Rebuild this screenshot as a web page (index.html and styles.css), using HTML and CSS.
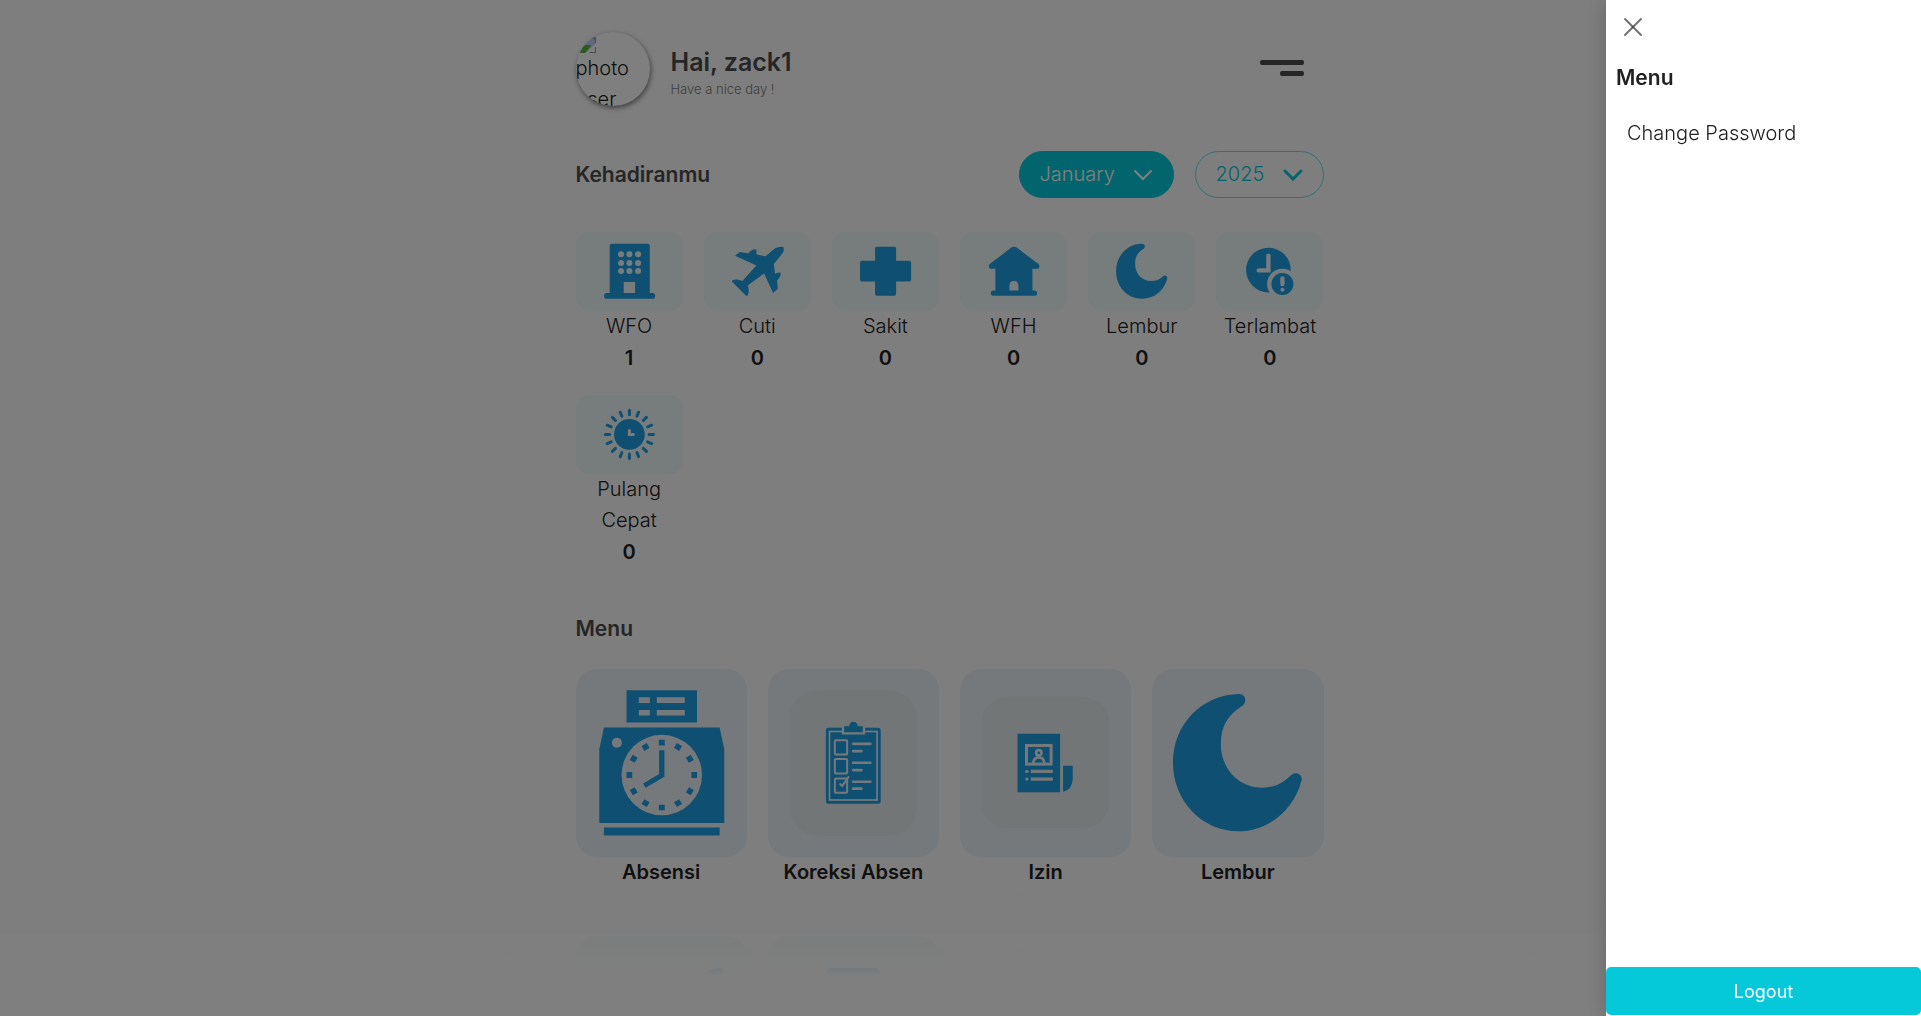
FILE: index.html
```html
<!DOCTYPE html>
<html lang="id">
<head>
<meta charset="utf-8">
<meta name="viewport" content="width=device-width, initial-scale=1">
<title>Kehadiran</title>
<link rel="stylesheet" href="styles.css">
</head>
<body>
<main class="page">
  <header class="profile">
    <div class="avatar" role="img" aria-label="photo user">
      <svg class="avatar-icon" viewBox="0 0 16 16" aria-hidden="true"><path fill="#c0d0f8" d="M0 0h13l2 3v4L7 15H0z"/><path fill="#5bb040" d="M0 15C2 9 6 6 11 9L5 16H0z"/><path fill="#fff" d="M6 16L16 6v4l-6 6z"/><path fill="#999" d="M11 0h5v6h-1V3L12 1zM15 10v5h-5l-1 1h7v-6z"/></svg>
      <span>photo</span><span>user</span>
    </div>
    <div class="greeting">
      <h1>Hai, zack1</h1>
      <p>Have a nice day !</p>
    </div>
    <button class="burger" type="button" aria-label="Buka menu"><span></span><span></span></button>
  </header>

  <section>
    <div class="section-head">
      <h2>Kehadiranmu</h2>
      <form class="filters">
        <div class="pill pill-month">
          <select aria-label="Bulan"><option>January</option></select>
          <svg viewBox="0 0 20 12" aria-hidden="true"><path d="M2 2l8 8 8-8"/></svg>
        </div>
        <div class="pill pill-year">
          <select aria-label="Tahun"><option>2025</option></select>
          <svg viewBox="0 0 20 12" aria-hidden="true"><path d="M2 2l8 8 8-8"/></svg>
        </div>
      </form>
    </div>
    <ul class="stats">
      <li>
        <svg class="tile" viewBox="45 37 321 237" aria-hidden="true"><path fill-rule="evenodd" d="M153 72H259Q266 72 266 79V220H274Q282 220 282 228.500Q282 237 274 237H137Q129 237 129 228.500Q129 220 137 220H146V79Q146 72 153 72zM188 187V220H222V187z"/><g class="hole"><circle cx="180" cy="104" r="9"/><circle cx="205" cy="104" r="9"/><circle cx="231" cy="104" r="9"/><circle cx="180" cy="130" r="9"/><circle cx="205" cy="130" r="9"/><circle cx="231" cy="130" r="9"/><circle cx="180" cy="154" r="9"/><circle cx="205" cy="154" r="9"/><circle cx="231" cy="154" r="9"/></g></svg>
        <span>WFO</span><strong>1</strong>
      </li>
      <li>
        <svg class="tile" viewBox="430 37 321 237" aria-hidden="true"><path d="M514 182Q530 176 545 184L587 137L523 108L537 97L563 101Q570 90 583 89Q590 91 586 104L614 110L643 86Q656 79 667 82Q672 90 665 101L639 133L643 163Q649 157 659 159Q662 171 649 182L651 207L637 220L610 161L561 197Q567 214 561 227L556 228L514 186z"/></svg>
        <span>Cuti</span><strong>0</strong>
      </li>
      <li>
        <svg class="tile" viewBox="816 37 321 237" aria-hidden="true"><rect x="945" y="81" width="63" height="147" rx="5"/><rect x="900" y="123" width="153" height="62" rx="5"/></svg>
        <span>Sakit</span><strong>0</strong>
      </li>
      <li>
        <svg class="tile" viewBox="59 37 321 237" aria-hidden="true"><path d="M214 83Q221 79 228 83L294 133Q300 139 294 147H276V212H283Q290 213 290 220Q290 228 283 228H158Q151 228 151 220Q151 213 158 212H165V147H149Q142 139 148 133zM207 212H234V197Q234 184 221 183Q207 184 207 197z" fill-rule="evenodd"/></svg>
        <span>WFH</span><strong>0</strong>
      </li>
      <li>
        <svg class="tile" viewBox="444 37 321 237" aria-hidden="true"><path d="M605 72C616 72 618 83 608 89C592 99 585 112 585 133C585 162 606 184 633 184C648 184 658 179 668 170C675 163 684 169 681 178C671 214 642 237 606 237C562 237 528 202 528 154C528 108 562 72 605 72z"/></svg>
        <span>Lembur</span><strong>0</strong>
      </li>
      <li>
        <svg class="tile" viewBox="828 37 321 237" aria-hidden="true"><circle cx="985" cy="151" r="67"/><circle class="hole" cx="1027" cy="193" r="46"/><circle cx="1027" cy="193" r="33"/><path class="line" stroke-width="13" d="M985 108V152H956M1027 176V193"/><circle class="hole" cx="1027" cy="210" r="6"/></svg>
        <span>Terlambat</span><strong>0</strong>
      </li>
      <li>
        <svg class="tile" viewBox="45 45 321 237" aria-hidden="true"><circle cx="205" cy="163" r="46"/><g class="ray"><path id="ray" d="M205 91V104"/><use href="#ray" transform="rotate(22.500 205 163)"/><use href="#ray" transform="rotate(45 205 163)"/><use href="#ray" transform="rotate(67.500 205 163)"/><use href="#ray" transform="rotate(90 205 163)"/><use href="#ray" transform="rotate(112.500 205 163)"/><use href="#ray" transform="rotate(135 205 163)"/><use href="#ray" transform="rotate(157.500 205 163)"/><use href="#ray" transform="rotate(180 205 163)"/><use href="#ray" transform="rotate(202.500 205 163)"/><use href="#ray" transform="rotate(225 205 163)"/><use href="#ray" transform="rotate(247.500 205 163)"/><use href="#ray" transform="rotate(270 205 163)"/><use href="#ray" transform="rotate(292.500 205 163)"/><use href="#ray" transform="rotate(315 205 163)"/><use href="#ray" transform="rotate(337.500 205 163)"/></g><path class="line" stroke-width="9" d="M205 151V163H217"/></svg>
        <span>Pulang Cepat</span><strong>0</strong>
      </li>
    </ul>
  </section>

  <section>
    <h2 class="menu-title">Menu</h2>
    <ul class="menu">
      <li><a href="#absensi">
        <svg class="tile" viewBox="45 57 515 564" aria-hidden="true"><path fill-rule="evenodd" d="M197 121H409V218H197zM234 142V159H267V142zM288 142V159H372V142zM234 180V197H267V180zM288 180V197H372V180z"/><path d="M129 233H477L491 298V520H115V298zM129 534H477V558H129z"/><circle class="hole" cx="168" cy="279" r="15"/><circle class="hole" cx="303" cy="376" r="121"/><path id="tick" d="M294 270H312V287H294z"/><use href="#tick" transform="rotate(30 303 376)"/><use href="#tick" transform="rotate(60 303 376)"/><use href="#tick" transform="rotate(90 303 376)"/><use href="#tick" transform="rotate(120 303 376)"/><use href="#tick" transform="rotate(150 303 376)"/><use href="#tick" transform="rotate(180 303 376)"/><use href="#tick" transform="rotate(210 303 376)"/><use href="#tick" transform="rotate(240 303 376)"/><use href="#tick" transform="rotate(270 303 376)"/><use href="#tick" transform="rotate(300 303 376)"/><use href="#tick" transform="rotate(330 303 376)"/><path d="M295 301H311V381L254 414L247 401L295 373z"/></svg>
        Absensi</a></li>
      <li><a href="#koreksi">
        <svg class="tile" viewBox="624 57 515 564" aria-hidden="true"><rect class="plate" x="687" y="120" width="387" height="439" rx="88"/><rect x="798" y="234" width="165" height="228" rx="8"/><rect class="line" x="809" y="245" width="143" height="206" stroke-width="5"/><path class="hole" d="M846 232H916V254H846z"/><path d="M853 229H868Q870 216 881 216Q892 216 894 229H909V247H853z"/><g class="line" stroke-width="6"><rect x="825" y="271" width="37" height="43" rx="3"/><rect x="825" y="328" width="37" height="43" rx="3"/><rect x="825" y="386" width="37" height="43" rx="3"/><path stroke-width="8" d="M880 282H932M880 304H905M880 339H932M880 361H905M880 396H932M880 417H905"/><path d="M841 403L847 409L866 382"/></g></svg>
        Koreksi Absen</a></li>
      <li><a href="#izin">
        <svg class="tile" viewBox="60 57 515 564" aria-hidden="true"><rect class="plate" x="123" y="141" width="387" height="395" rx="80"/><path d="M233 252H361V428H233zM370 348H399V389Q397 419 370 427z"/><rect class="line" x="260" y="287" width="74" height="56" stroke-width="9" /><g class="line" stroke-width="8"><circle cx="297" cy="309" r="8"/><path d="M280 341Q282 323 297 323Q312 323 314 341"/></g><path class="hole" d="M273 360H339V370H273zM273 383H339V393H273z"/><circle class="hole" cx="261" cy="365" r="5"/><circle class="hole" cx="261" cy="388" r="5"/></svg>
        Izin</a></li>
      <li><a href="#lembur">
        <svg class="tile" viewBox="636 57 515 564" aria-hidden="true"><path d="M897 132C916 131 923 153 910 166C864 195 843 228 843 284C843 356 897 414 967 414C1003 414 1028 402 1055 376C1070 363 1089 374 1086 392C1062 483 984 545 895 545C787 545 699 454 699 339C699 222 787 134 897 132z"/></svg>
        Lembur</a></li>
      <li><a href="#cuti" aria-label="Cuti">
        <svg class="tile tile-pale" viewBox="0 0 515 564" aria-hidden="true"><path d="M382 120Q396 100 425 96Q445 97 448 115L420 190L340 280L370 450L330 480L250 340L150 420L90 330L210 260L80 170L120 150L290 180z"/></svg></a></li>
      <li><a href="#kesehatan" aria-label="Kesehatan">
        <svg class="tile tile-pale" viewBox="0 0 515 564" aria-hidden="true"><rect x="177" y="96" width="160" height="370" rx="14"/><rect x="70" y="202" width="375" height="158" rx="14"/></svg></a></li>
    </ul>
  </section>
</main>
<div class="fade"></div>
<div class="backdrop"></div>
<aside class="drawer" aria-label="Menu">
  <button class="close" type="button" aria-label="Tutup"><svg viewBox="0 0 20 20" aria-hidden="true"><path d="M2 2l16 16"/><path d="M18 2L2 18"/></svg></button>
  <h2>Menu</h2>
  <a href="#change-password">Change Password</a>
  <button class="logout" type="button">Logout</button>
</aside>
</body>
</html>
```
FILE: styles.css
```css
* { box-sizing: border-box; }
body {
  height: 100vh;
  margin: 0;
  padding-right: 22px;
  overflow: hidden;
  background: #fcfcfc;
  color: #212529;
  font: 300 20px/31px Inter, "Liberation Sans", sans-serif;
}
h1, h2, p, ul { margin: 0; padding: 0; }
ul { list-style: none; }
a { color: inherit; text-decoration: none; }
button, select { font: inherit; cursor: pointer; }
h2 { color: #4c4c4c; font-size: 21px; font-weight: 600; line-height: 32px; }

.page { max-width: 748px; margin: 0 auto; padding-top: 32px; }
.profile { display: flex; align-items: center; gap: 21px; margin-bottom: 45px; }
.avatar {
  display: flex;
  flex-direction: column;
  flex: none;
  width: 74px;
  height: 74px;
  padding-top: 5px;
  border-radius: 50%;
  overflow: hidden;
  background: #fff;
  box-shadow: 1px 2px 5px rgba(0, 0, 0, .5);
  color: #212121;
}
.avatar-icon { flex: none; width: 16px; height: 16px; margin-left: 4px; }
.greeting { flex: 1; padding-top: 5px; }
.greeting h1 { color: #4c4c4c; font-size: 25px; font-weight: 600; line-height: 34px; }
.greeting p { color: #7c7c7c; font-size: 13px; line-height: 20px; }
.burger {
  display: flex;
  flex-direction: column;
  align-items: flex-end;
  gap: 6px;
  padding: 0;
  margin: 0 20px 2px 0;
  border: 0;
  background: none;
}
.burger span { width: 44px; height: 5px; border-radius: 2px; background: #4c4c4c; }
.burger span + span { width: 24px; }

.section-head { display: flex; justify-content: space-between; align-items: center; margin-bottom: 34px; }
.filters { display: flex; gap: 21px; }
.pill { position: relative; height: 47px; color: #05c9d9; }
.pill select {
  width: 100%;
  height: 100%;
  padding: 0 20px;
  border: 1px solid #69dfe8;
  border-radius: 24px;
  appearance: none;
  background: transparent;
  color: inherit;
}
.pill svg {
  position: absolute;
  right: 21px;
  top: 18px;
  width: 20px;
  height: 12px;
  fill: none;
  stroke: currentColor;
  stroke-width: 3;
  stroke-linecap: round;
  pointer-events: none;
}
.pill-month { width: 155px; color: #fff; }
.pill-month select { border-color: #05c9d9; background: #05c9d9; }
.pill-month svg { stroke-width: 2; }
.pill-year { width: 129px; }

.stats { display: grid; grid-template-columns: repeat(6, 1fr); gap: 21px; margin-bottom: 45px; color: #212121; }
.stats li { display: flex; flex-direction: column; text-align: center; }
.stats strong { font-weight: 600; line-height: 32px; }
.tile { --tile: #eef9f9; display: block; width: 100%; border-radius: 14px; background: var(--tile); fill: #1ea0e4; }
.hole { fill: var(--tile); }
.line { fill: none; stroke: var(--tile); stroke-linecap: round; }
.ray { stroke: #1ea0e4; stroke-width: 9; stroke-linecap: round; }
.plate { fill: #e5edef; }

.menu-title { margin-bottom: 24px; }
.menu { display: grid; grid-template-columns: repeat(4, 1fr); gap: 48px 21px; }
.menu a { display: block; color: #212121; font-weight: 600; text-align: center; }
.menu .tile { --tile: #ecf3f8; border-radius: 21px; }
.menu .tile-pale { --tile: #eef9f9; }

.fade {
  position: fixed;
  inset: auto 0 0;
  height: 124px;
  background: linear-gradient(rgba(255, 255, 255, 0), #fff 84px);
}
.backdrop { position: fixed; inset: 0; background: rgba(0, 0, 0, .5); }
.drawer {
  position: fixed;
  inset: 0 0 0 auto;
  display: flex;
  flex-direction: column;
  align-items: flex-start;
  width: 315px;
  padding: 16px 0 1px;
  background: #fff;
  box-shadow: 0 0 21px rgba(0, 0, 0, .2);
}
.close { width: 22px; height: 22px; margin: 0 0 24px 16px; padding: 1px; border: 0; background: none; }
.close svg { display: block; width: 20px; height: 20px; stroke: #333; stroke-width: 2; stroke-linecap: round; stroke-opacity: .7; }
.drawer h2 { margin: 0 0 24px 10px; color: #212121; }
.drawer a { margin-left: 21px; color: #212121; }
.logout {
  width: 100%;
  height: 48px;
  margin-top: auto;
  border: 0;
  border-radius: 5px;
  background: #05c9d9;
  color: #fff;
  font-size: 18px;
  font-weight: 400;
}
```
